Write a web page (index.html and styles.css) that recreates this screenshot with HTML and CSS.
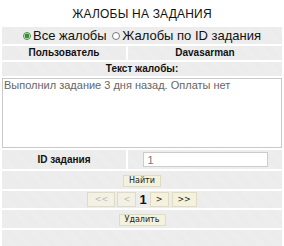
FILE: index.html
```html
<!DOCTYPE html>
<html lang="ru">
<head>
    <meta charset="UTF-8">
    <title>Жалобы на задания</title>
    <link rel="stylesheet" href="styles.css">
</head>
<body>
    <h1>Жалобы на задания</h1>

    <table class="complaints">
        <tr>
            <td colspan="2" class="filter">
                <label><input type="radio" name="mode" checked>Все жалобы</label>
                <label><input type="radio" name="mode">Жалобы по ID задания</label>
            </td>
        </tr>
        <tr>
            <td class="label first">Пользователь</td>
            <td class="label">Davasarman</td>
        </tr>
        <tr>
            <td colspan="2" class="label head">Текст жалобы:</td>
        </tr>
        <tr>
            <td colspan="2" class="plain">
                <textarea class="text">Выполнил задание 3 дня назад. Оплаты нет</textarea>
            </td>
        </tr>
        <tr>
            <td class="label first tall">ID задания</td>
            <td class="tall"><input type="text" class="task-id" value="1"></td>
        </tr>
        <tr>
            <td colspan="2" class="center"><button class="btn">Найти</button></td>
        </tr>
        <tr>
            <td colspan="2" class="center">
                <div class="pager">
                    <button class="btn first-page" disabled>&lt;&lt;</button>
                    <button class="btn" disabled>&lt;</button>
                    <span class="page">1</span>
                    <button class="btn">&gt;</button>
                    <button class="btn last-page">&gt;&gt;</button>
                </div>
            </td>
        </tr>
        <tr>
            <td colspan="2" class="center"><button class="btn">Удалить</button></td>
        </tr>
        <tr>
            <td colspan="2" class="empty"></td>
        </tr>
    </table>
</body>
</html>
```

FILE: styles.css
```css
/* General Layout */
body {
    font-family: "Liberation Sans", Arial, sans-serif;
    background-color: #fff;
    margin: 0;
    color: #111;
}

h1 {
    font-size: 12px;
    font-weight: normal;
    text-transform: uppercase;
    text-align: center;
    margin: 0;
    padding: 7px 0 5px;
    line-height: 14px;
    letter-spacing: 0.2px;
}

/* Table */
.complaints {
    width: 100%;
    border-spacing: 2px;
    margin-top: -1px;
}

.complaints td {
    background: repeating-linear-gradient(45deg, #ebebeb 0, #ebebeb 1px, #eeeeee 1px, #eeeeee 2px);
    padding: 0;
    text-align: center;
}

.filter {
    font-size: 13px;
    height: 17px;
    line-height: 17px;
}

.filter label {
    margin: 0 1px;
}

.filter input {
    width: 8px;
    height: 8px;
    margin: 0 2px 0 0;
    vertical-align: 0;
    accent-color: #3a8c3a;
}

.label {
    font-size: 10px;
    font-weight: bold;
    height: 14px;
    line-height: 14px;
}

.first {
    width: 124px;
}

.head {
    height: 14px;
}

.complaints td.plain {
    background: #fff;
}

/* Textarea */
.text {
    display: block;
    box-sizing: border-box;
    width: 100%;
    height: 70px;
    margin: 0;
    padding: 0 1px;
    border: 1px solid #c9c9c9;
    font-family: "Liberation Sans", Arial, sans-serif;
    font-size: 11px;
    color: #666;
    resize: none;
}

.tall {
    height: 19px;
}

.task-id {
    box-sizing: border-box;
    width: 125px;
    height: 15px;
    margin: 0 auto;
    padding: 0 4px;
    border: 1px solid #ccc;
    font-family: "Liberation Sans", Arial, sans-serif;
    font-size: 11px;
    color: #777;
    display: block;
}

.center {
    height: 17px;
}

/* Buttons */
.btn {
    font-family: "DejaVu Sans", Tahoma, sans-serif;
    font-size: 8px;
    height: 12px;
    line-height: 10px;
    padding: 0 5px;
    background-color: #f4f1dc;
    border: 1px solid #e0dcc2;
    color: #222;
    vertical-align: middle;
}

.btn:disabled {
    color: #bbb;
    background-color: #f3f1e4;
}

.pager {
    display: flex;
    justify-content: center;
    align-items: center;
    gap: 2px;
}

.pager .btn {
    height: 15px;
    width: 19px;
    padding: 0;
}

.pager .first-page {
    width: 28px;
}

.pager .last-page {
    width: 25px;
    margin-left: 1px;
}

.page {
    font-size: 13px;
    font-weight: bold;
    padding: 0 1px;
    line-height: 14px;
}

.empty {
    height: 16px;
}
```
